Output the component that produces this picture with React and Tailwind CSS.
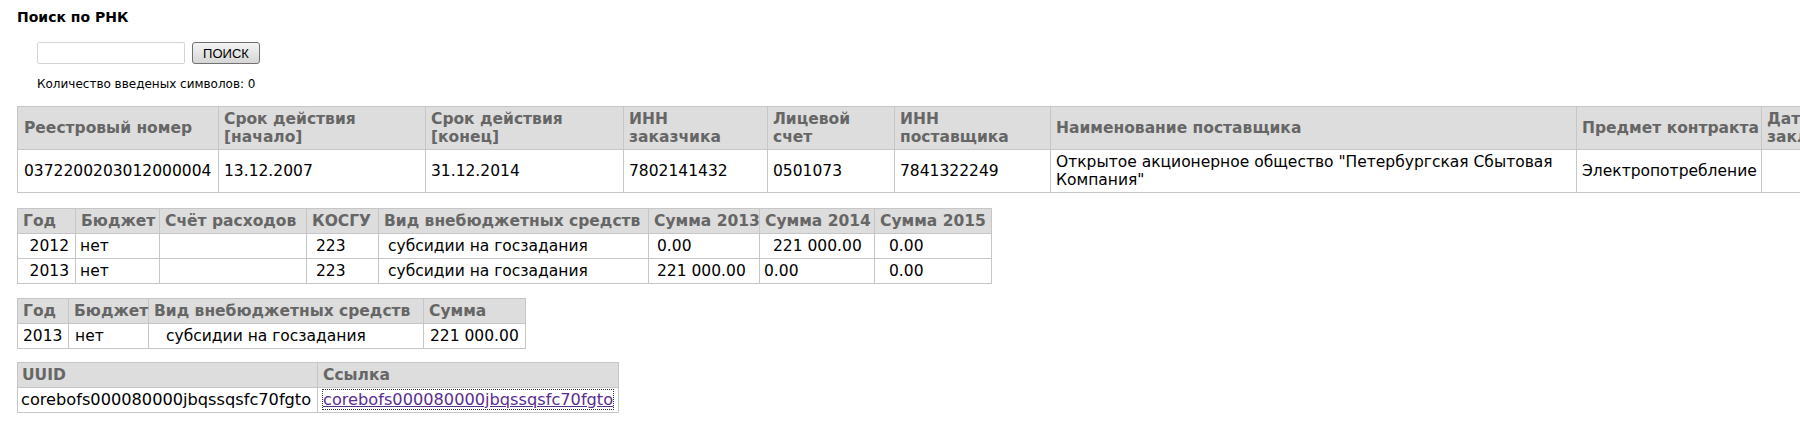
import React from 'react';

// Поиск по РНК — результаты

const th = 'border border-[#c6c6c6] bg-[#dddddd] text-[#666666] font-bold text-left align-middle whitespace-nowrap px-[5px] py-[3px]';
const td = 'border border-[#c6c6c6] text-black align-middle px-[5px] py-[3px]';

function MainTable() {
  const widths = [201, 207, 198, 144, 127, 156, 526, 185, 200];
  return (
    <table className="table-fixed border-collapse w-[1944px]">
      <colgroup>
        {widths.map((w, i) => (
          <col key={i} style={{ width: w }} />
        ))}
      </colgroup>
      <thead>
        <tr>
          <th className={`${th} pl-[6px]`}>Реестровый номер</th>
          <th className={th}>Срок действия<br />[начало]</th>
          <th className={th}>Срок действия<br />[конец]</th>
          <th className={th}>ИНН<br />заказчика</th>
          <th className={th}>Лицевой<br />счет</th>
          <th className={th}>ИНН<br />поставщика</th>
          <th className={th}>Наименование поставщика</th>
          <th className={th}>Предмет контракта</th>
          <th className={th}>Дата<br />заключения</th>
        </tr>
      </thead>
      <tbody>
        <tr>
          <td className={`${td} pl-[6px]`}>0372200203012000004</td>
          <td className={td}>13.12.2007</td>
          <td className={td}>31.12.2014</td>
          <td className={td}>7802141432</td>
          <td className={td}>0501073</td>
          <td className={td}>7841322249</td>
          <td className={td}>Открытое акционерное общество "Петербургская Сбытовая Компания"</td>
          <td className={td}>Электропотребление</td>
          <td className={td}></td>
        </tr>
      </tbody>
    </table>
  );
}

function FinanceTable() {
  const rows = [
    { year: '2012', s13: '0.00', s14: '221 000.00', s14pad: 'pl-[13px]', s15: '0.00' },
    { year: '2013', s13: '221 000.00', s14: '0.00', s14pad: 'pl-[4px]', s15: '0.00' },
  ];
  return (
    <table className="table-fixed border-collapse w-[974px]">
      <colgroup>
        {[58, 84, 147, 72, 270, 111, 115, 117].map((w, i) => (
          <col key={i} style={{ width: w }} />
        ))}
      </colgroup>
      <thead>
        <tr>
          <th className={th}>Год</th>
          <th className={`${th} px-[3px]`}>Бюджет</th>
          <th className={`${th} px-[3px]`}>Счёт расходов</th>
          <th className={`${th} px-[3px]`}>КОСГУ</th>
          <th className={`${th} px-[3px]`}>Вид внебюджетных средств</th>
          <th className={`${th} px-[3px]`}>Сумма 2013</th>
          <th className={`${th} px-[3px]`}>Сумма 2014</th>
          <th className={`${th} px-[3px]`}>Сумма 2015</th>
        </tr>
      </thead>
      <tbody>
        {rows.map((r) => (
          <tr key={r.year}>
            <td className={`${td} text-right pr-[6px]`}>{r.year}</td>
            <td className={`${td} pl-[4px]`}>нет</td>
            <td className={td}></td>
            <td className={`${td} pl-[9px]`}>223</td>
            <td className={`${td} pl-[9px]`}>субсидии на госзадания</td>
            <td className={`${td} pl-[8px]`}>{r.s13}</td>
            <td className={`${td} ${r.s14pad}`}>{r.s14}</td>
            <td className={`${td} pl-[14px]`}>{r.s15}</td>
          </tr>
        ))}
      </tbody>
    </table>
  );
}

function SumTable() {
  return (
    <table className="table-fixed border-collapse w-[508px]">
      <colgroup>
        {[51, 80, 275, 102].map((w, i) => (
          <col key={i} style={{ width: w }} />
        ))}
      </colgroup>
      <thead>
        <tr>
          <th className={th}>Год</th>
          <th className={`${th} px-[3px]`}>Бюджет</th>
          <th className={`${th} px-[3px]`}>Вид внебюджетных средств</th>
          <th className={th}>Сумма</th>
        </tr>
      </thead>
      <tbody>
        <tr>
          <td className={td}>2013</td>
          <td className={`${td} pl-[6px]`}>нет</td>
          <td className={`${td} pl-[17px]`}>субсидии на госзадания</td>
          <td className={`${td} pl-[6px]`}>221 000.00</td>
        </tr>
      </tbody>
    </table>
  );
}

function UuidTable() {
  const uuid = 'corebofs000080000jbqssqsfc70fgto';
  return (
    <table className="table-fixed border-collapse w-[601px]">
      <colgroup>
        <col style={{ width: 300 }} />
        <col style={{ width: 301 }} />
      </colgroup>
      <thead>
        <tr>
          <th className={`${th} pl-[4px]`}>UUID</th>
          <th className={th}>Ссылка</th>
        </tr>
      </thead>
      <tbody>
        <tr className="text-[16.2px]">
          <td className={`${td} pl-[3px] pr-0 whitespace-nowrap`}>{uuid}</td>
          <td className={`${td} pl-[5px] pr-0 whitespace-nowrap`}>
            <a href="#" className="text-[#5a2d91] underline outline outline-1 outline-dotted outline-[#333]">
              {uuid}
            </a>
          </td>
        </tr>
      </tbody>
    </table>
  );
}

export default function App() {
  return (
    <div className="w-[1800px] h-[427px] overflow-hidden bg-white text-black font-['DejaVu_Sans',Verdana,sans-serif]">
      <h3 className="pl-[17px] pt-[9px] text-[14px] leading-[16px] font-bold">Поиск по РНК</h3>

      <div className="ml-[37px] mt-[16px] flex items-center gap-[7px]">
        <input
          type="text"
          className="w-[148px] h-[22px] border border-[#d4d4d4] rounded-[2px] px-1 text-[13px] outline-none"
        />
        <button className="w-[68px] h-[22px] mt-[1px] border border-[#707070] rounded-[3px] bg-gradient-to-b from-[#f4f4f4] to-[#d6d6d6] text-[13px] leading-none text-black font-['Liberation_Sans',Arial,sans-serif]">
          ПОИСК
        </button>
      </div>

      <p className="ml-[37px] mt-[13px] text-[12px] leading-[14px]">Количество введеных символов: 0</p>

      <div className="ml-[17px] mt-[15px] text-[15.5px] leading-[18px] flex flex-col items-start">
        <MainTable />
        <div className="mt-[15px]">
          <FinanceTable />
        </div>
        <div className="mt-[14px]">
          <SumTable />
        </div>
        <div className="mt-[13px]">
          <UuidTable />
        </div>
      </div>
    </div>
  );
}
